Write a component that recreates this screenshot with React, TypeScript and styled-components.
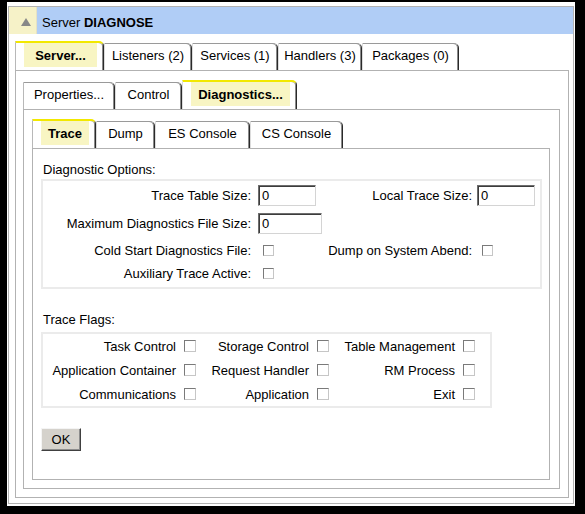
import React from 'react';
import styled, { createGlobalStyle } from 'styled-components';

const GlobalStyle = createGlobalStyle`
  html, body { margin: 0; padding: 0; background: #000; }
  body {
    font-family: "Liberation Sans", Arial, Helvetica, sans-serif;
    font-size: 13px;
    color: #000;
  }
  * { box-sizing: border-box; }
`;

const Window = styled.div`
  margin: 2px 0 0 7px;
  width: 568px;
  height: 504px;
  background: #fff;
  padding: 4px 1px 2px 1px;
  display: flex;
  flex-direction: column;
`;

const Frame = styled.div`
  flex: 1;
  display: flex;
  flex-direction: column;
  border: 1px solid #b2b2b2;
  min-height: 0;
`;

const TitleBar = styled.div`
  height: 27px;
  flex: none;
  display: flex;
`;

const Collapse = styled.div`
  width: 28px;
  background: #f6f2c8;
  border-right: 1px solid #e6e2c4;
  padding: 11px 0 0 12px;

  svg { display: block; }
`;

const TitleText = styled.div`
  flex: 1;
  background: #b0cdf6;
  padding: 3px 0 0 5px;
  display: flex;
  align-items: center;
  white-space: pre;
`;

const Level = styled.div<{ $pad: string }>`
  flex: 1;
  display: flex;
  flex-direction: column;
  padding: ${(p) => p.$pad};
  min-height: 0;
`;

const TabStrip = styled.div`
  height: 29px;
  flex: none;
  display: flex;
  align-items: flex-end;
`;

const Tab = styled.div<{ $w: number; $active?: boolean; $first?: boolean }>`
  width: ${(p) => p.$w}px;
  height: ${(p) => (p.$active ? 29 : 27)}px;
  display: flex;
  background: #fff;
  border-top: ${(p) => (p.$active ? '2px solid #f2e800' : '1px solid #9a9a9a')};
  border-left: 1px solid ${(p) => (p.$first ? '#b8b8b8' : '#dcdcdc')};
  border-right: 1px solid #2a2a2a;
  box-shadow: inset -1px 0 0 #8a8a8a;
  border-top-right-radius: 5px;
  padding: ${(p) => (p.$active ? '0 6px 3px 8px' : '0 0 3px 0')};
`;

const TabLabel = styled.span<{ $active?: boolean }>`
  flex: 1;
  display: flex;
  align-items: center;
  justify-content: center;
  white-space: nowrap;
  font-weight: ${(p) => (p.$active ? 700 : 400)};
  background: ${(p) => (p.$active ? '#f8f5c3' : 'transparent')};
`;

const Panel = styled.div`
  flex: 1;
  display: flex;
  flex-direction: column;
  border: 1px solid #b2b2b2;
  min-height: 0;
`;

const Content = styled.div`
  flex: 1;
  display: flex;
  flex-direction: column;
  align-items: flex-start;
  padding: 13px 0 0 8px;
`;

const SectionLabel = styled.div<{ $top: number; $gap: number }>`
  line-height: 16px;
  margin: ${(p) => p.$top}px 0 ${(p) => p.$gap}px 2px;
`;

const Group = styled.div<{ $w: number }>`
  width: ${(p) => p.$w}px;
  border: 2px solid #ebebeb;
`;

const OptionsGrid = styled.div`
  display: grid;
  grid-template-columns: 215px 64px 155px 58px;
  grid-template-rows: 28px 28px 27px 19px;
  padding: 0 5px 4px 0;
  align-items: center;
`;

const OptLabel = styled.div<{ $pr: number }>`
  text-align: right;
  padding-right: ${(p) => p.$pr}px;
  white-space: nowrap;
`;

const FieldCell = styled.div`
  display: flex;
  align-items: center;
`;

const TextField = styled.input<{ $w: number }>`
  width: ${(p) => p.$w}px;
  height: 21px;
  margin: 0;
  padding: 0 0 0 3px;
  font: inherit;
  color: #000;
  background: #fff;
  border: 1px solid;
  border-color: #6e6e6e #d4d4d4 #d4d4d4 #6e6e6e;
  box-shadow: inset 1px 1px 0 #3c3c3c;
  outline: none;
`;

const Check = styled.span<{ $size: number; $ml?: number }>`
  display: inline-block;
  flex: none;
  width: ${(p) => p.$size}px;
  height: ${(p) => p.$size}px;
  margin-left: ${(p) => p.$ml ?? 0}px;
  background: #fff;
  border: 1px solid;
  border-color: #7a7a7a #c6c6c6 #c6c6c6 #7a7a7a;
`;

const FlagsGrid = styled.div`
  display: grid;
  grid-template-columns: 153px 133px 146px;
  grid-auto-rows: 24px;
  padding-right: 15px;
`;

const FlagCell = styled.div`
  display: flex;
  align-items: center;
  justify-content: flex-end;
  gap: 8px;
  white-space: nowrap;
`;

const OkButton = styled.button`
  width: 40px;
  height: 23px;
  margin: 20px 0 0 0;
  padding: 0;
  font: inherit;
  color: #000;
  background: #d5d2cc;
  border: 1px solid;
  border-color: #f4f4f4 #404040 #404040 #f4f4f4;
  box-shadow: inset -1px -1px 0 #8c8c8c;
`;

type TabDef = { label: string; w: number; active?: boolean };

const row1: TabDef[] = [
  { label: 'Server...', w: 89, active: true },
  { label: 'Listeners (2)', w: 88 },
  { label: 'Services (1)', w: 86 },
  { label: 'Handlers (3)', w: 84 },
  { label: 'Packages (0)', w: 97 },
];
const row2: TabDef[] = [
  { label: 'Properties...', w: 92 },
  { label: 'Control', w: 67 },
  { label: 'Diagnostics...', w: 115, active: true },
];
const row3: TabDef[] = [
  { label: 'Trace', w: 64, active: true },
  { label: 'Dump', w: 59 },
  { label: 'ES Console', w: 95 },
  { label: 'CS Console', w: 93 },
];

const Tabs: React.FC<{ tabs: TabDef[] }> = ({ tabs }) => (
  <TabStrip>
    {tabs.map((t, i) => (
      <Tab key={t.label} $w={t.w} $active={t.active} $first={i === 0}>
        <TabLabel $active={t.active}>{t.label}</TabLabel>
      </Tab>
    ))}
  </TabStrip>
);

const flags = [
  'Task Control',
  'Storage Control',
  'Table Management',
  'Application Container',
  'Request Handler',
  'RM Process',
  'Communications',
  'Application',
  'Exit',
];

export default function App() {
  return (
    <>
      <GlobalStyle />
      <Window>
        <Frame>
          <TitleBar>
            <Collapse>
              <svg width="10" height="8" viewBox="0 0 10 8">
                <polygon points="5,0 10,8 0,8" fill="#888" />
              </svg>
            </Collapse>
            <TitleText>
              Server <b>DIAGNOSE</b>
            </TitleText>
          </TitleBar>
          <Level $pad="7px 4px 5px 6px">
            <Tabs tabs={row1} />
            <Panel>
              <Level $pad="9px 8px 8px 7px">
                <Tabs tabs={row2} />
                <Panel>
                  <Level $pad="9px 9px 8px 8px">
                    <Tabs tabs={row3} />
                    <Panel>
                      <Content>
                        <SectionLabel $top={0} $gap={1}>Diagnostic Options:</SectionLabel>
                        <Group $w={501}>
                          <OptionsGrid>
                            <OptLabel $pr={7}>Trace Table Size:</OptLabel>
                            <FieldCell>
                              <TextField $w={58} defaultValue="0" />
                            </FieldCell>
                            <OptLabel $pr={5}>Local Trace Size:</OptLabel>
                            <FieldCell>
                              <TextField $w={58} defaultValue="0" />
                            </FieldCell>

                            <OptLabel $pr={7}>Maximum Diagnostics File Size:</OptLabel>
                            <FieldCell>
                              <TextField $w={64} defaultValue="0" />
                            </FieldCell>
                            <div />
                            <div />

                            <OptLabel $pr={7}>Cold Start Diagnostics File:</OptLabel>
                            <FieldCell>
                              <Check $size={11} $ml={5} />
                            </FieldCell>
                            <OptLabel $pr={5}>Dump on System Abend:</OptLabel>
                            <FieldCell>
                              <Check $size={11} $ml={5} />
                            </FieldCell>

                            <OptLabel $pr={7}>Auxiliary Trace Active:</OptLabel>
                            <FieldCell>
                              <Check $size={11} $ml={5} />
                            </FieldCell>
                          </OptionsGrid>
                        </Group>

                        <SectionLabel $top={23} $gap={4}>Trace Flags:</SectionLabel>
                        <Group $w={451}>
                          <FlagsGrid>
                            {flags.map((f) => (
                              <FlagCell key={f}>
                                {f}
                                <Check $size={12} />
                              </FlagCell>
                            ))}
                          </FlagsGrid>
                        </Group>

                        <OkButton>OK</OkButton>
                      </Content>
                    </Panel>
                  </Level>
                </Panel>
              </Level>
            </Panel>
          </Level>
        </Frame>
      </Window>
    </>
  );
}
